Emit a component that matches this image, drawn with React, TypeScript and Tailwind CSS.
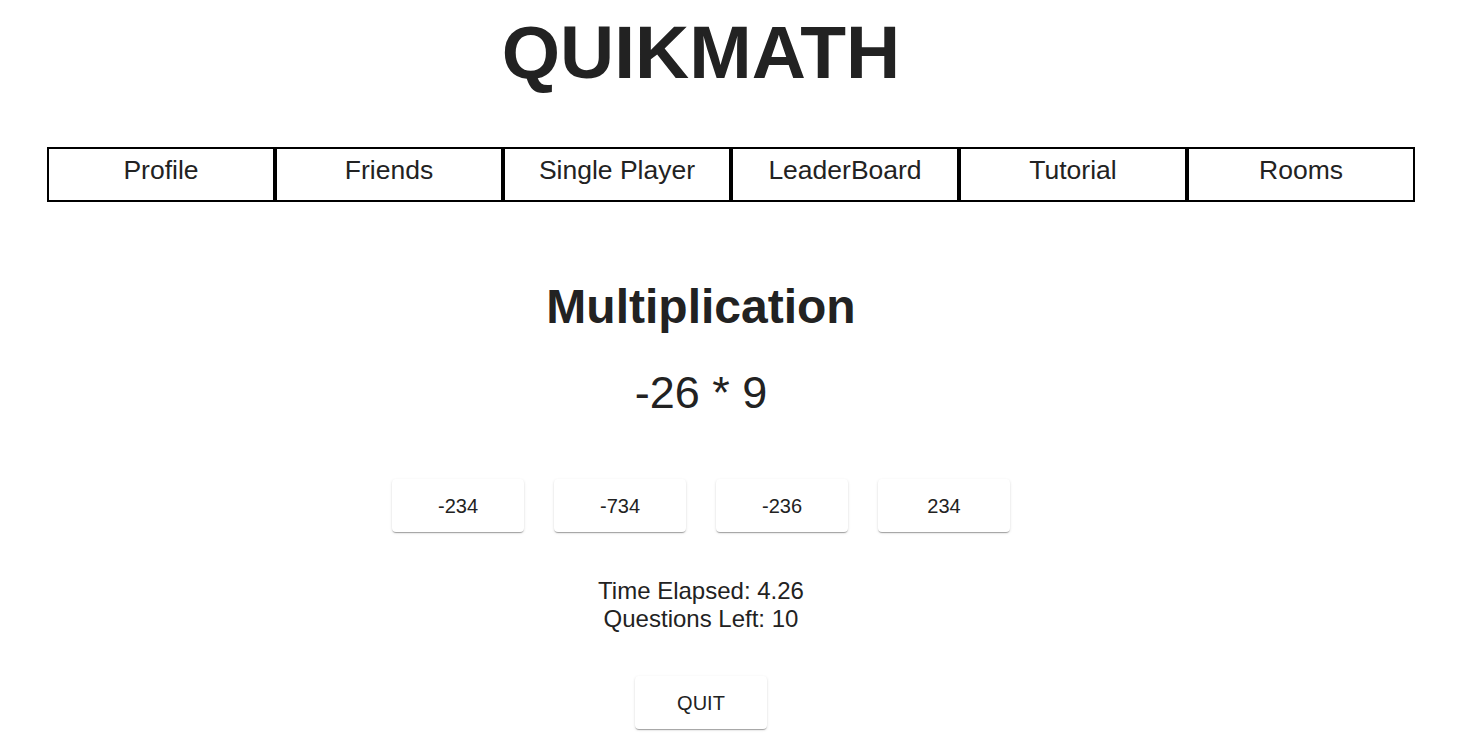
import React from "react";

const tabs = ["Profile", "Friends", "Single Player", "LeaderBoard", "Tutorial", "Rooms"];
const answers = ["-234", "-734", "-236", "234"];

const btn =
  "w-[132px] h-[53px] rounded-[4px] bg-white text-[20px] leading-[24px] text-[#222] shadow-[0px_2px_1px_-1px_rgba(0,0,0,0.2),0px_1px_1px_0px_rgba(0,0,0,0.14),0px_1px_3px_0px_rgba(0,0,0,0.12)]";

const App: React.FC = () => {
  return (
    <div className="min-h-screen bg-white text-[#222] font-['Liberation_Sans',Arial,sans-serif]">
      <div className="w-[1402px] text-center">
        <h1 className="pt-[15px] text-[75px] leading-[75px] font-bold">QUIKMATH</h1>
      </div>

      <nav className="mt-[57px] ml-[47px] w-[1368px] flex">
        {tabs.map((t) => (
          <div
            key={t}
            className="w-[228px] h-[55px] border-2 border-black pt-[6px] text-center text-[26.5px] leading-[30px] text-[#222]"
          >
            {t}
          </div>
        ))}
      </nav>

      <main className="w-[1402px] flex flex-col items-center">
        <h2 className="mt-[77px] text-[48px] leading-[56px] font-bold">Multiplication</h2>
        <div className="mt-[32px] text-[45px] leading-[52px]">-26 * 9</div>

        <div className="mt-[60px] flex gap-[30px]">
          {answers.map((a) => (
            <button key={a} className={btn}>
              {a}
            </button>
          ))}
        </div>

        <div className="mt-[45px] text-[24px] leading-[28px] text-center">
          <div>Time Elapsed: 4.26</div>
          <div>Questions Left: 10</div>
        </div>

        <button className={`mt-[43px] ${btn}`}>QUIT</button>
      </main>
    </div>
  );
};

export default App;
